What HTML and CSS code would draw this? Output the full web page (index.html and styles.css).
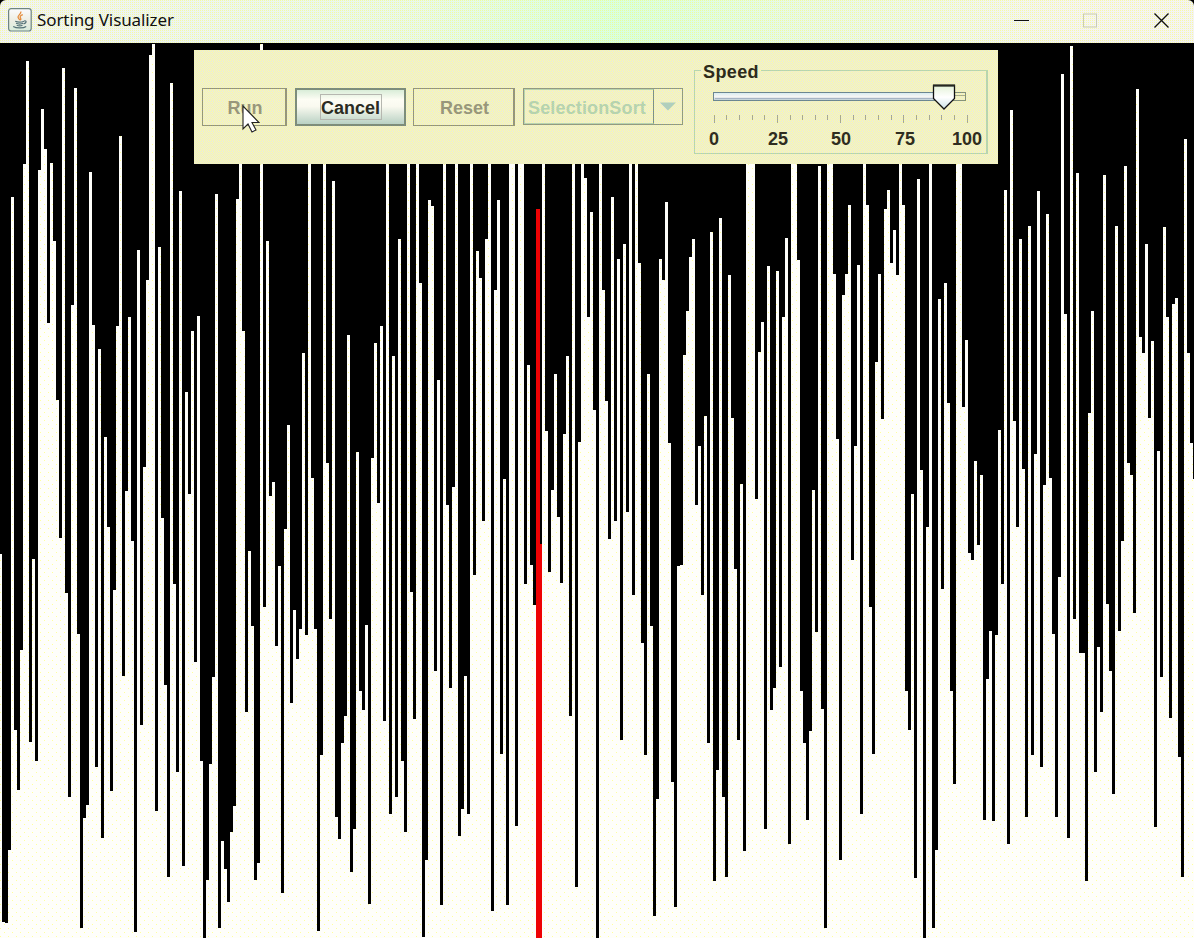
FILE: index.html
```
<!DOCTYPE html>
<html lang="en">
<head>
<meta charset="utf-8">
<title>Sorting Visualizer</title>
<link rel="stylesheet" href="styles.css">
</head>
<body>
<div class="window">
  <header class="titlebar">
    <svg class="app-icon" width="24" height="24" viewBox="0 0 24 24" fill="none">
      <defs><linearGradient id="tile" x2="0" y2="1"><stop stop-color="#fbfbff"/><stop offset=".5" stop-color="#eeeee4"/><stop offset="1" stop-color="#d8ecdc"/></linearGradient></defs>
      <rect x=".6" y=".6" width="22.6" height="22.4" rx="2.5" fill="url(#tile)" stroke="#6f8580" stroke-width="1.2"/>
      <path d="M12.8 3.5c1 2.6-3.6 3.6-2.7 6 .3.9 1.3 1.5 1.6 2.6M14.8 6.6c-2.2.8-3.5 2-2.2 3.6.6.8.3 1.5-.4 2.1" stroke="#e48a3c" stroke-width="1.3"/>
      <path d="M7.2 13.3c2.3.9 6.7.8 9-.1M8 15.3c2 .8 5.3.8 7.2 0M8.7 17.3c1.7.7 4.3.7 5.8 0M5.2 18.5c3 1.9 10.400 1.900 13 0M16.200 12.800c2.700-.3 2.600 2.300-.6 3.100" stroke="#557378" stroke-width="1.2"/>
    </svg>
    <h1 class="title">Sorting Visualizer</h1>
    <svg class="controls" width="160" height="20" viewBox="0 0 160 20" fill="none">
      <path d="M1 10.500h15" stroke="#111"/>
      <rect x="70.500" y="4" width="13" height="13" stroke="#c9ccb4"/>
      <path d="M141.500 3.500l14 14M155.500 3.500l-14 14" stroke="#111" stroke-width="1.400"/>
    </svg>
  </header>
  <main class="stage">
    <div class="chart" id="chart"></div>
    <section class="panel">
      <button class="btn run" disabled>Run</button>
      <button class="btn cancel"><span class="focus">Cancel</span></button>
      <button class="btn reset" disabled>Reset</button>
      <div class="combo">
        <span class="combo-value">SelectionSort</span>
        <span class="combo-arrow"><svg width="16" height="9" viewBox="0 0 16 9"><path d="M0 .5h16L8 8.500z" fill="#b0cfbc"/></svg></span>
      </div>
      <div class="speed">
        <span class="speed-title">Speed</span>
        <svg class="slider" width="290" height="82" viewBox="0 0 290 82">
          <defs>
            <linearGradient id="track" x2="0" y2="1"><stop stop-color="#d5ecf0"/><stop offset=".5" stop-color="#f5f5f4"/><stop offset="1" stop-color="#b8cbd0"/></linearGradient>
            <linearGradient id="thumb" x2="0" y2="1"><stop stop-color="#e4f2d8"/><stop offset=".5" stop-color="#fff"/><stop offset="1" stop-color="#cbe3e6"/></linearGradient>
          </defs>
          <rect x="18.500" y="21.500" width="252" height="8" fill="none" stroke="#85927a"/>
          <path d="M240 24.500h30" stroke="#a9ad8b"/>
          <rect x="18.500" y="21.500" width="230" height="8" fill="url(#track)" stroke="#6d8790"/>
          <path d="M20 27.500h218" stroke="#a6b4c4"/>
          <path d="M238.500 14.500h21v13l-10.500 10.500-10.500-10.500z" fill="url(#thumb)" stroke="#111" stroke-width="1.300"/>
          <path d="M238 14.500h22" stroke="#252720" stroke-width="2"/>
          <g id="ticks" stroke="#a8aa90"></g>
          <g class="tick-labels"><text x="19" y="74">0</text><text x="83" y="74">25</text><text x="146" y="74">50</text><text x="210" y="74">75</text><text x="272" y="74">100</text></g>
        </svg>
      </div>
    </section>
    <svg class="cursor" width="18" height="30" viewBox="0 0 18 30"><path d="M1 1v23l5-5 4 8 4-2-4-7.500h7z" fill="#fff" stroke="#222" stroke-width="1.100"/></svg>
  </main>
</div>
<script src="chart.js"></script>
</body>
</html>
```
FILE: styles.css
```
body {
  margin: 0;
  background: #000;
  font-family: "Liberation Sans", Arial, sans-serif;
}

.window {
  width: 1194px;
  height: 938px;
  overflow: hidden;
  display: flex;
  flex-direction: column;
}

.titlebar {
  box-sizing: border-box;
  flex: 0 0 43px;
  display: flex;
  align-items: center;
  padding: 0 21px 3px 8px;
  border-radius: 6px 6px 0 0;
  background:
    conic-gradient(at 1px 1px, transparent 75%, rgba(255, 255, 60, 0.4) 0) 0 0 / 2px 2px,
    linear-gradient(90deg, #f0f3f4 0, #e8f8ea 35%, #d8ffe0 52%, #e8f8e8 68%, #f4f4f2 90%);
}

.title {
  margin: 0 auto 0 5px;
  font: 400 17px/24px "Noto Sans", sans-serif;
  letter-spacing: -0.1px;
  color: #111;
}

.stage {
  position: relative;
  flex: 1;
}

.chart {
  display: flex;
  align-items: flex-end;
  height: 895px;
  margin-left: -1px;
  width: 1197px;
}

.bar {
  flex: 0 0 3px;
  background:
    conic-gradient(at 1px 1px, transparent 75%, #ffff9c 0) 0 0 / 8px 8px fixed,
    conic-gradient(at 1px 1px, transparent 75%, #ffff9c 0) 4px 4px / 8px 8px fixed,
    #fefefa fixed;
}

.bar.active {
  background: #ee0204;
  z-index: 1;
}

.bar.selected {
  margin-right: -1px;
  flex-basis: 4px;
}

.panel {
  position: absolute;
  left: 194px;
  top: 7px;
  box-sizing: border-box;
  width: 804px;
  height: 114px;
  padding: 5px 10px 10px 8px;
  display: flex;
  align-items: center;
  background: conic-gradient(#e4e4e6 25%, #ffffa0 0 50%, #e4e4e6 0 75%, #ffffa0 0) 0 0 / 2px 2px fixed;
  font-size: 18px;
  font-weight: 700;
}

.btn {
  box-sizing: border-box;
  height: 38px;
  margin: 5px 8px 0 0;
  padding: 3px 0 0 2px;
  border: 1px solid #96977a;
  border-right-width: 2px;
  background: none;
  font: inherit;
  color: #98977b;
}

.run { width: 85px; }

.cancel {
  width: 111px;
  margin-right: 7px;
  padding: 0;
  border: 2px solid #7d8d7b;
  background: linear-gradient(#d9edd8, #fdfdf4 28%, #fafaf0 48%, #b9d1c4);
  color: #2b2b22;
}

.focus {
  display: inline-block;
  box-sizing: border-box;
  width: 62px;
  height: 26px;
  padding: 3px 0 0;
  line-height: 20px;
  border: 1px solid #b6b7b0;
}

.reset { width: 102px; }

.combo {
  box-sizing: border-box;
  display: flex;
  width: 160px;
  height: 37px;
  margin: 4px 11px 0 0;
  border: 1px solid #929b81;
  color: #b6d3ae;
}

.combo-value {
  box-sizing: border-box;
  width: 130px;
  padding: 8px 0 0 3px;
  border: 1px solid #b9d4ae;
  border-right: 1px solid #7f9382;
  line-height: 20px;
  letter-spacing: 0.15px;
}

.combo-arrow {
  flex: 1;
  display: grid;
  place-items: center;
}

.speed {
  position: relative;
  box-sizing: border-box;
  width: 294px;
  height: 84px;
  margin-top: 15px;
  border: 1px solid #b8d5ae;
  border-right-width: 2px;
}

.speed-title {
  position: absolute;
  left: 6px;
  top: -10px;
  padding: 0 2px;
  line-height: 22px;
  letter-spacing: 0.4px;
  background: conic-gradient(#e4e4e6 25%, #ffffa0 0 50%, #e4e4e6 0 75%, #ffffa0 0) 0 0 / 2px 2px fixed;
  color: #2d2b1c;
}

.slider { display: block; }

.tick-labels {
  fill: #2f2d20;
  text-anchor: middle;
}

.cursor {
  position: absolute;
  left: 242px;
  top: 62px;
}
```
FILE: chart.js
```
// Top edge of every bar in window coordinates, left to right.
const tops = [
  554,922,923,850,197,730,790,650,164,61,742,559,761,170,109,149,323,163,241,400,538,68,593,797,305,
  88,634,928,818,805,172,325,767,349,838,437,527,791,590,326,136,676,491,317,541,932,250,725,467,280,
  55,44,811,247,518,685,877,83,584,772,191,866,392,494,331,662,316,761,938,880,764,677,194,928,841,
  869,902,832,806,199,120,331,712,551,626,880,863,44,607,241,496,482,646,566,893,529,425,703,610,659,
  629,353,635,100,478,629,931,755,100,463,619,181,817,839,743,716,335,872,829,452,691,710,625,904,458,
  343,503,326,721,100,814,356,797,239,761,832,100,592,719,100,283,937,860,200,206,671,380,905,100,505,
  688,487,100,836,809,676,814,100,575,251,278,521,239,100,911,290,200,754,479,905,100,100,826,100,100,
  584,365,565,605,209,544,100,431,572,490,374,517,583,434,356,716,100,887,442,100,178,317,212,410,938,
  100,290,401,539,197,521,259,740,244,512,100,595,100,263,643,755,374,626,916,799,259,280,202,443,782,
  907,566,565,355,311,257,239,505,446,595,416,743,232,881,770,218,797,877,275,418,569,740,484,851,100,
  100,100,499,352,322,829,266,710,688,271,667,317,238,844,100,100,260,691,743,820,731,490,632,166,709,
  928,100,100,274,439,860,295,274,205,560,446,265,814,100,205,607,754,362,274,419,209,190,263,230,275,
  100,205,691,730,494,878,179,470,938,527,100,928,850,299,589,283,403,691,784,100,100,407,340,553,560,
  461,545,475,820,679,631,821,635,430,584,190,844,110,421,527,239,469,817,226,755,454,191,767,485,214,
  478,634,817,577,74,314,838,46,619,173,653,653,881,413,311,772,647,712,175,604,671,794,226,631,541,
  166,463,475,613,89,337,353,244,418,341,827,451,677,227,317,718,304,298,757,877,139,353,443,479
];
const selected = 179;
const compared = 180;
const floor = 938;

const chart = document.getElementById("chart");
tops.forEach((top, i) => {
  const bar = document.createElement("div");
  bar.className = "bar";
  if (i === selected) bar.classList.add("active", "selected");
  if (i === compared) bar.classList.add("active");
  bar.style.height = `${floor - top}px`;
  chart.append(bar);
});

// Slider tick marks: every fifth one is a long, labelled tick.
const ticks = document.getElementById("ticks");
for (let v = 0; v <= 20; v++) {
  const mark = document.createElementNS("http://www.w3.org/2000/svg", "path");
  const x = Math.round(18.6 + v * 12.65) + 0.5;
  mark.setAttribute("d", `M${x} 44v${v % 5 === 0 ? 8 : 5}`);
  ticks.append(mark);
}
```
